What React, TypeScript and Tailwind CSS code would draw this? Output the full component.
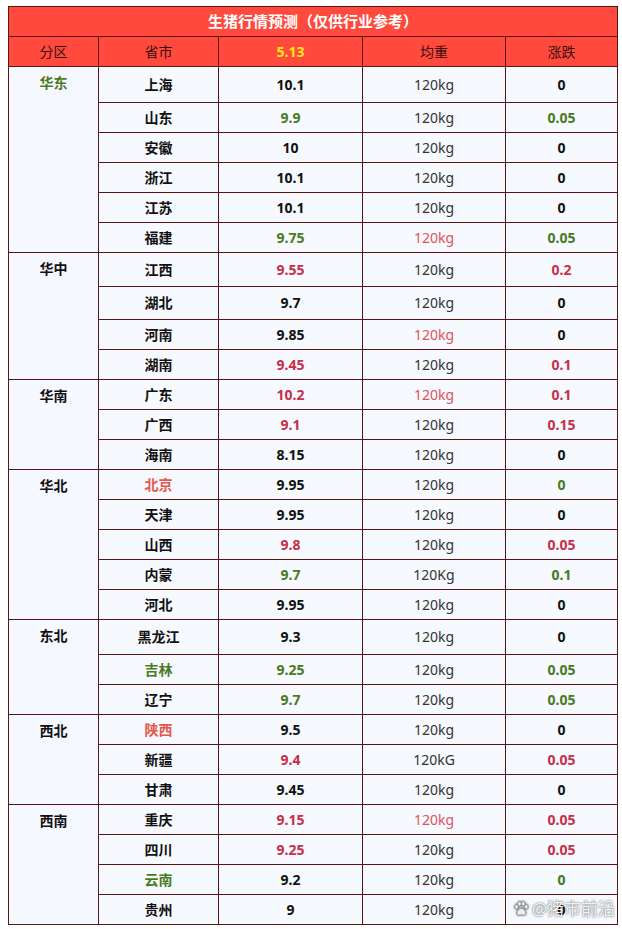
type Tone = "k" | "g" | "r" | "p" | "o" | "w"

const tone: Record<Tone, string> = {
  k: "text-[#111111]",
  g: "text-[#4a7a1e]",
  r: "text-[#c72f4a]",
  p: "text-[#e0525c]",
  o: "text-[#e4574a]",
  w: "text-[#333333]",
}

type Row = {
  city: string
  cityTone?: Tone
  price: string
  priceTone?: Tone
  weight?: string
  weightTone?: Tone
  change: string
  changeTone?: Tone
  h?: string
}

type Region = { name: string; tone?: Tone; span: string; rows: Row[] }

const regions: Region[] = [
  {
    name: "华东",
    tone: "g",
    span: "row-span-6",
    rows: [
      { city: "上海", price: "10.1", change: "0", h: "h-[35px]" },
      { city: "山东", price: "9.9", priceTone: "g", change: "0.05", changeTone: "g" },
      { city: "安徽", price: "10", change: "0" },
      { city: "浙江", price: "10.1", change: "0" },
      { city: "江苏", price: "10.1", change: "0" },
      { city: "福建", price: "9.75", priceTone: "g", weightTone: "p", change: "0.05", changeTone: "g" },
    ],
  },
  {
    name: "华中",
    span: "row-span-4",
    rows: [
      { city: "江西", price: "9.55", priceTone: "r", change: "0.2", changeTone: "r", h: "h-[33px]" },
      { city: "湖北", price: "9.7", change: "0", h: "h-[32px]" },
      { city: "河南", price: "9.85", weightTone: "p", change: "0" },
      { city: "湖南", price: "9.45", priceTone: "r", change: "0.1", changeTone: "r" },
    ],
  },
  {
    name: "华南",
    span: "row-span-3",
    rows: [
      { city: "广东", price: "10.2", priceTone: "r", weightTone: "p", change: "0.1", changeTone: "r" },
      { city: "广西", price: "9.1", priceTone: "r", change: "0.15", changeTone: "r" },
      { city: "海南", price: "8.15", change: "0" },
    ],
  },
  {
    name: "华北",
    span: "row-span-5",
    rows: [
      { city: "北京", cityTone: "o", price: "9.95", change: "0", changeTone: "g" },
      { city: "天津", price: "9.95", change: "0" },
      { city: "山西", price: "9.8", priceTone: "r", change: "0.05", changeTone: "r" },
      { city: "内蒙", price: "9.7", priceTone: "g", weight: "120Kg", change: "0.1", changeTone: "g" },
      { city: "河北", price: "9.95", change: "0" },
    ],
  },
  {
    name: "东北",
    span: "row-span-3",
    rows: [
      { city: "黑龙江", price: "9.3", change: "0", h: "h-[34px]" },
      { city: "吉林", cityTone: "g", price: "9.25", priceTone: "g", change: "0.05", changeTone: "g" },
      { city: "辽宁", price: "9.7", priceTone: "g", change: "0.05", changeTone: "g" },
    ],
  },
  {
    name: "西北",
    span: "row-span-3",
    rows: [
      { city: "陕西", cityTone: "o", price: "9.5", change: "0" },
      { city: "新疆", price: "9.4", priceTone: "r", weight: "120kG", change: "0.05", changeTone: "r" },
      { city: "甘肃", price: "9.45", change: "0" },
    ],
  },
  {
    name: "西南",
    span: "row-span-4",
    rows: [
      { city: "重庆", price: "9.15", priceTone: "r", weightTone: "p", change: "0.05", changeTone: "r" },
      { city: "四川", price: "9.25", priceTone: "r", change: "0.05", changeTone: "r" },
      { city: "云南", cityTone: "g", price: "9.2", change: "0", changeTone: "g" },
      { city: "贵州", price: "9", change: "0" },
    ],
  },
]

const cell = "bg-[#f6f9fe] flex items-center justify-center text-[14px] leading-[20px]"

const Paw = () => (
  <svg width="18" height="18" viewBox="0 0 24 24" className="drop-shadow-[0_0_1px_rgba(0,0,0,0.7)]">
    <g fill="#eeeeee" stroke="#8a8a8a" strokeWidth="1">
      <ellipse cx="6" cy="9" rx="2.4" ry="3" />
      <ellipse cx="10" cy="5" rx="2.4" ry="3" />
      <ellipse cx="15" cy="5" rx="2.4" ry="3" />
      <ellipse cx="19" cy="9" rx="2.4" ry="3" />
      <path d="M12.5 11c-3 0-6 4-6 6.5 0 2 1.8 3 3.5 2.6 1-.2 1.7-.6 2.5-.6s1.5.4 2.5.6c1.7.4 3.5-.6 3.5-2.6 0-2.5-3-6.5-6-6.5z" />
    </g>
  </svg>
)

export default function App() {
  return (
    <div className="min-h-[929px] bg-white pt-[6px] pl-[8px] font-['Noto_Sans','Noto_Sans_CJK_SC',sans-serif]">
      <div className="relative w-[610px]">
        <div className="grid grid-cols-[89px_119px_143px_142px_111px] gap-px bg-[#5a1414] p-px">
          <div className="col-span-5 h-[29px] bg-[#ff4a3d] flex items-center justify-center text-[15px] font-bold text-white">
            生猪行情预测（仅供行业参考）
          </div>
          {["分区", "省市", "5.13", "均重", "涨跌"].map((t) => (
            <div
              key={t}
              className={`h-[29px] bg-[#ff4a3d] flex items-center justify-center text-[14px] ${
                t === "5.13" ? "font-bold text-[#ffe81a]" : "text-[#3a0d0d]"
              }`}
            >
              {t}
            </div>
          ))}
          {regions.map((reg) => (
            <>
              <div
                key={reg.name}
                className={`${reg.span} bg-[#f5f8ff] flex justify-center pt-[6px] text-[14px] leading-[20px] font-bold ${tone[reg.tone ?? "k"]}`}
              >
                {reg.name}
              </div>
              {reg.rows.map((r) => (
                <>
                  <div key={r.city} className={`${cell} ${r.h ?? "h-[29px]"} font-bold ${tone[r.cityTone ?? "k"]}`}>
                    {r.city}
                  </div>
                  <div className={`${cell} font-bold ${tone[r.priceTone ?? "k"]}`}>{r.price}</div>
                  <div className={`${cell} ${tone[r.weightTone ?? "w"]}`}>{r.weight ?? "120kg"}</div>
                  <div className={`${cell} font-bold ${tone[r.changeTone ?? "k"]}`}>{r.change}</div>
                </>
              ))}
            </>
          ))}
        </div>
        <div className="absolute right-[3px] bottom-[6px] flex items-center gap-[2px] text-[17px] leading-[20px] text-[#f2f2f2] [text-shadow:0_0_2px_rgba(0,0,0,0.75)]">
          <Paw />
          <span>@猪市前沿</span>
        </div>
      </div>
    </div>
  )
}
